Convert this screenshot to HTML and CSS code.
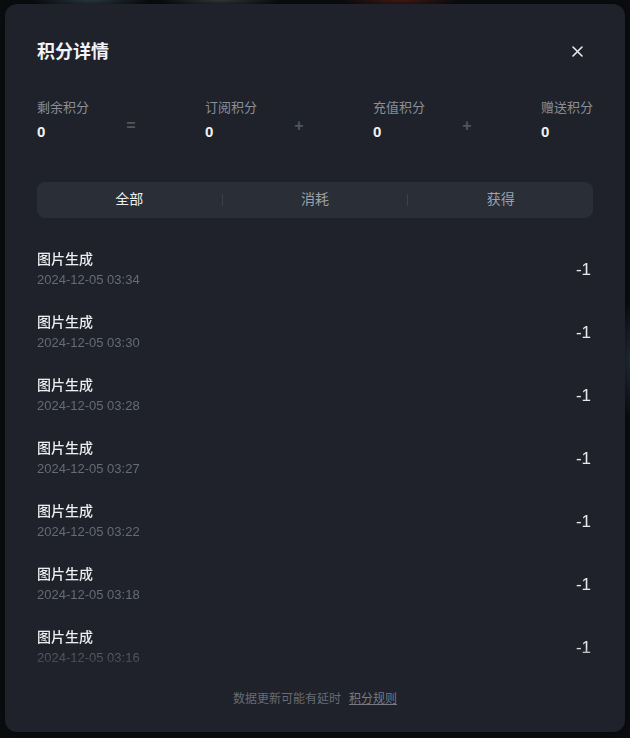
FILE: index.html
```html
<!DOCTYPE html>
<html lang="zh-CN">
<head>
<meta charset="utf-8">
<title>积分详情</title>
<link rel="stylesheet" href="styles.css">
</head>
<body>
<div class="modal">
  <div class="header">
    <h1 class="title">积分详情</h1>
    <button class="close" aria-label="关闭">
      <svg width="11" height="11" viewBox="0 0 11 11"><path d="M1 1 L10 10 M10 1 L1 10" stroke="#e8eaee" stroke-width="1.6" stroke-linecap="round" fill="none"/></svg>
    </button>
  </div>

  <div class="stats">
    <div class="stat-col">
      <div class="stat"><div class="stat-label">剩余积分</div><div class="stat-value">0</div></div>
      <div class="op">=</div>
    </div>
    <div class="stat-col">
      <div class="stat"><div class="stat-label">订阅积分</div><div class="stat-value">0</div></div>
      <div class="op">+</div>
    </div>
    <div class="stat-col">
      <div class="stat"><div class="stat-label">充值积分</div><div class="stat-value">0</div></div>
      <div class="op">+</div>
    </div>
    <div class="stat-col">
      <div class="stat"><div class="stat-label">赠送积分</div><div class="stat-value">0</div></div>
    </div>
  </div>

  <div class="tabs">
    <div class="tab active">全部</div>
    <div class="tab-sep"></div>
    <div class="tab">消耗</div>
    <div class="tab-sep"></div>
    <div class="tab">获得</div>
  </div>

  <div class="list">
    <div class="item"><div class="info"><div class="item-title">图片生成</div><div class="item-date">2024-12-05 03:34</div></div><div class="amount">-1</div></div>
    <div class="item"><div class="info"><div class="item-title">图片生成</div><div class="item-date">2024-12-05 03:30</div></div><div class="amount">-1</div></div>
    <div class="item"><div class="info"><div class="item-title">图片生成</div><div class="item-date">2024-12-05 03:28</div></div><div class="amount">-1</div></div>
    <div class="item"><div class="info"><div class="item-title">图片生成</div><div class="item-date">2024-12-05 03:27</div></div><div class="amount">-1</div></div>
    <div class="item"><div class="info"><div class="item-title">图片生成</div><div class="item-date">2024-12-05 03:22</div></div><div class="amount">-1</div></div>
    <div class="item"><div class="info"><div class="item-title">图片生成</div><div class="item-date">2024-12-05 03:18</div></div><div class="amount">-1</div></div>
    <div class="item"><div class="info"><div class="item-title">图片生成</div><div class="item-date">2024-12-05 03:16</div></div><div class="amount">-1</div></div>
  </div>

  <div class="footer">
    <span>数据更新可能有延时</span>
    <a class="rules" href="#">积分规则</a>
  </div>
</div>
</body>
</html>
```

FILE: styles.css
```css
* { box-sizing: border-box; }

html, body {
  margin: 0;
  height: 100%;
}

body {
  padding: 4px 5px;
  font-family: "Liberation Sans", "Noto Sans CJK SC", sans-serif;
  background:
    radial-gradient(ellipse 60px 10px at 90px 0, rgba(70, 95, 110, 0.6), transparent),
    radial-gradient(ellipse 60px 8px at 220px 0, rgba(110, 110, 110, 0.5), transparent),
    radial-gradient(ellipse 60px 8px at 400px 0, rgba(120, 40, 30, 0.6), transparent),
    radial-gradient(ellipse 20px 60px at 630px 360px, rgba(60, 80, 100, 0.5), transparent),
    #0b0d10;
}

.modal {
  width: 620px;
  height: 728px;
  background: #1f222a;
  border-radius: 12px;
  padding: 32px 32px 0;
  display: flex;
  flex-direction: column;
  box-shadow: 0 0 20px rgba(0, 0, 0, 0.4);
}

.header {
  display: flex;
  align-items: center;
  justify-content: space-between;
  height: 32px;
}

.title {
  margin: 0;
  font-size: 18px;
  font-weight: 700;
  color: #f1f3f6;
  line-height: 32px;
}

.close {
  width: 32px;
  height: 32px;
  border: 0;
  padding: 0;
  background: transparent;
  display: flex;
  align-items: center;
  justify-content: center;
  margin-top: -2px;
  cursor: pointer;
}

.stats {
  display: grid;
  grid-template-columns: 1fr 1fr 1fr auto;
  margin-top: 30px;
}

.stat-col {
  display: flex;
  align-items: center;
}

.stat-label {
  font-size: 13px;
  line-height: 20px;
  color: #8a8f98;
  white-space: nowrap;
}

.stat-value {
  margin-top: 4px;
  font-size: 15px;
  font-weight: 700;
  line-height: 20px;
  color: #f1f3f6;
}

.op {
  width: 84px;
  text-align: center;
  font-size: 16px;
  font-weight: 700;
  line-height: 16px;
  color: #50555e;
  padding-top: 11px;
}

.tabs {
  margin-top: 40px;
  height: 36px;
  background: #2a2e37;
  border-radius: 8px;
  display: flex;
  align-items: center;
}

.tab {
  flex: 1;
  text-align: center;
  font-size: 14px;
  line-height: 20px;
  margin-top: -2px;
  color: #9ca1a9;
}

.tab.active {
  color: #eceef1;
}

.tab-sep {
  width: 1px;
  height: 12px;
  background: #3d414a;
}

.list {
  margin-top: 20px;
  height: 442px;
  overflow: hidden;
  -webkit-mask-image: linear-gradient(to bottom, #000 calc(100% - 34px), transparent);
  mask-image: linear-gradient(to bottom, #000 calc(100% - 34px), transparent);
}

.item {
  display: flex;
  align-items: center;
  justify-content: space-between;
  padding: 11px 0;
}

.item-title {
  font-size: 14px;
  line-height: 20px;
  font-weight: 500;
  color: #eceef1;
}

.item-date {
  margin-top: 1px;
  font-size: 13px;
  line-height: 20px;
  color: #666b74;
}

.amount {
  font-size: 17px;
  color: #e6e8ec;
  padding-right: 2px;
}

.footer {
  margin-top: 9px;
  display: flex;
  justify-content: center;
  gap: 8px;
  font-size: 12px;
  line-height: 20px;
  color: #676c75;
}

.rules {
  color: #767b84;
  text-decoration: underline;
}
```
